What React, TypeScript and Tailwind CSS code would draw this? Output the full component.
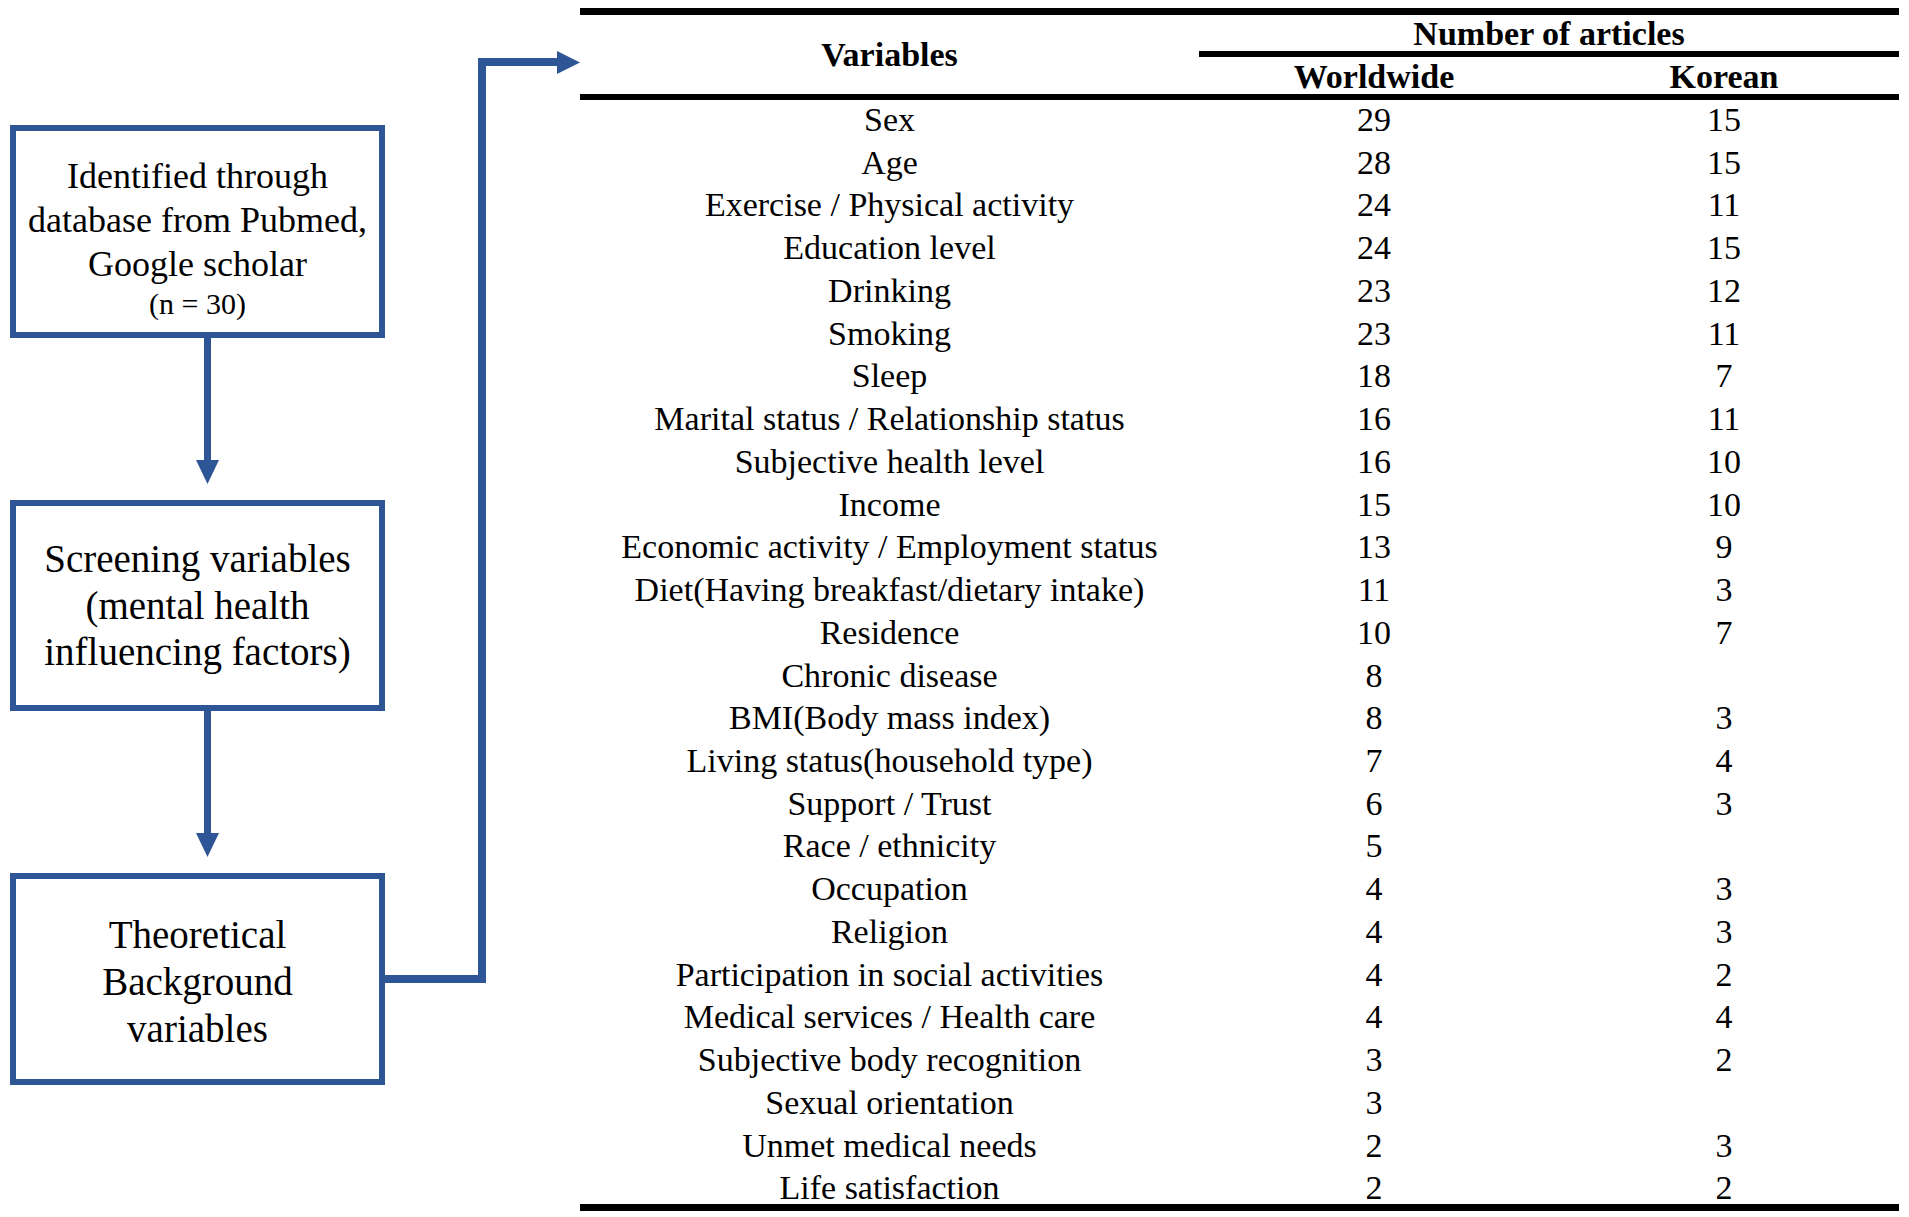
const rows: [string, string, string][] = [
  ["Sex", "29", "15"],
  ["Age", "28", "15"],
  ["Exercise / Physical activity", "24", "11"],
  ["Education level", "24", "15"],
  ["Drinking", "23", "12"],
  ["Smoking", "23", "11"],
  ["Sleep", "18", "7"],
  ["Marital status / Relationship status", "16", "11"],
  ["Subjective health level", "16", "10"],
  ["Income", "15", "10"],
  ["Economic activity / Employment status", "13", "9"],
  ["Diet(Having breakfast/dietary intake)", "11", "3"],
  ["Residence", "10", "7"],
  ["Chronic disease", "8", ""],
  ["BMI(Body mass index)", "8", "3"],
  ["Living status(household type)", "7", "4"],
  ["Support / Trust", "6", "3"],
  ["Race / ethnicity", "5", ""],
  ["Occupation", "4", "3"],
  ["Religion", "4", "3"],
  ["Participation in social activities", "4", "2"],
  ["Medical services / Health care", "4", "4"],
  ["Subjective body recognition", "3", "2"],
  ["Sexual orientation", "3", ""],
  ["Unmet medical needs", "2", "3"],
  ["Life satisfaction", "2", "2"],
]

const BLUE = "#2e5596"

function DownArrow() {
  return (
    <svg width="375" height="162" className="block">
      <rect x={194} y={0} width={7} height={124} fill={BLUE} />
      <polygon points="186,122 209,122 197.5,146" fill={BLUE} />
    </svg>
  )
}

function Elbow() {
  // box 3 -> table header
  return (
    <svg width="195" height="1217" className="block shrink-0">
      <polyline points="0,979 97,979 97,62 174,62" fill="none" stroke={BLUE} strokeWidth={8} strokeLinejoin="miter" />
      <polygon points="172,51 195,62.5 172,74" fill={BLUE} />
    </svg>
  )
}

export default function App() {
  return (
    <div className="flex w-[1909px] h-[1217px] bg-white text-black [font-family:'Liberation_Serif','Times_New_Roman',serif]">
      {/* flow chart */}
      <div className="flex flex-col w-[385px] pl-[10px] pt-[125px] shrink-0">
        <div className="w-[375px] h-[213px] border-[6px] border-[#2e5596] pt-[23px] text-center">
          <p className="text-[36px] leading-[44px]">Identified through</p>
          <p className="text-[36px] leading-[44px]">database from Pubmed,</p>
          <p className="text-[36px] leading-[44px]">Google scholar</p>
          <p className="text-[30px] leading-[36px]">(n = 30)</p>
        </div>
        <DownArrow />
        <div className="w-[375px] h-[211px] border-[6px] border-[#2e5596] pt-[30px] text-center text-[39px] leading-[46.5px]">
          <p>Screening variables</p>
          <p>(mental health</p>
          <p>influencing factors)</p>
        </div>
        <DownArrow />
        <div className="w-[375px] h-[212px] border-[6px] border-[#2e5596] pt-[32px] text-center text-[39px] leading-[47px]">
          <p>Theoretical</p>
          <p>Background</p>
          <p>variables</p>
        </div>
      </div>

      <Elbow />

      {/* table */}
      <div className="w-[1319px] mt-[8px] shrink-0 self-start">
        <div className="flex border-t-[7px] border-b-[6px] border-black h-[92px] font-bold text-[34px]">
          <div className="w-[619px] flex items-center justify-center">Variables</div>
          <div className="w-[700px] flex flex-col">
            <div className="h-[36px] leading-[38px] text-center">Number of articles</div>
            <div className="border-t-[6px] border-black flex">
              <div className="w-[350px] h-[37px] leading-[39px] text-center">Worldwide</div>
              <div className="w-[350px] h-[37px] leading-[39px] text-center">Korean</div>
            </div>
          </div>
        </div>
        <div className="flex flex-col gap-[4.74px] pt-[1px] h-[1111px] border-b-[7px] border-black text-[34px]">
          {rows.map(([name, world, korea]) => (
            <div key={name} className="flex h-[38px] shrink-0 leading-[38px] text-center">
              <div className="w-[619px] whitespace-nowrap">{name}</div>
              <div className="w-[350px]">{world}</div>
              <div className="w-[350px]">{korea}</div>
            </div>
          ))}
        </div>
      </div>
    </div>
  )
}
